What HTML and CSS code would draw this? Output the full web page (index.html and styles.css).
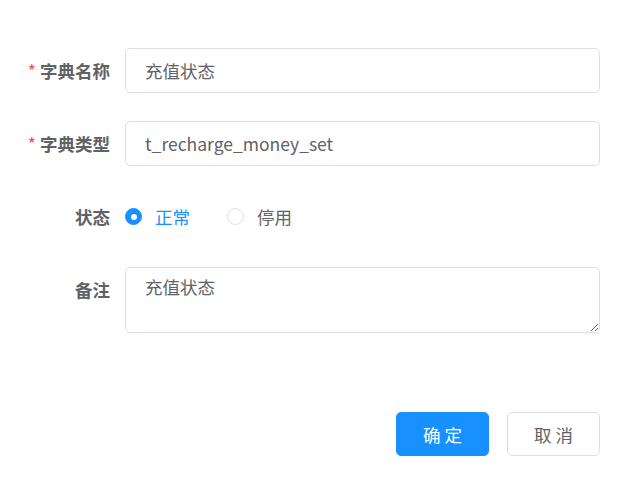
FILE: index.html
```html
<!DOCTYPE html>
<html lang="zh-CN">
<head>
<meta charset="utf-8">
<title>字典</title>
<link rel="stylesheet" href="styles.css">
</head>
<body>
<div class="dialog-body">
  <form class="form">
    <div class="form-item">
      <label class="label"><span class="req">*</span>字典名称</label>
      <div class="control"><input class="input" type="text" value="充值状态"></div>
    </div>
    <div class="form-item">
      <label class="label"><span class="req">*</span>字典类型</label>
      <div class="control"><input class="input" type="text" value="t_recharge_money_set"></div>
    </div>
    <div class="form-item">
      <label class="label">状态</label>
      <div class="control radios">
        <span class="radio checked"><span class="dot"></span><span class="radio-text">正常</span></span>
        <span class="radio"><span class="dot"></span><span class="radio-text">停用</span></span>
      </div>
    </div>
    <div class="form-item">
      <label class="label">备注</label>
      <div class="control"><textarea class="textarea" rows="2">充值状态</textarea></div>
    </div>
  </form>
  <div class="footer">
    <button class="btn primary" type="button">确 定</button>
    <button class="btn" type="button">取 消</button>
  </div>
</div>
</body>
</html>
```
FILE: styles.css
```css
html, body {
  margin: 0;
  padding: 0;
  background: #ffffff;
}
body {
  font-family: "Noto Sans CJK SC", "Noto Sans", sans-serif;
  color: #606266;
}
.dialog-body {
  padding: 48px 22px 0 25px;
}
.form {
  display: flex;
  flex-direction: column;
  gap: 28px;
}
.form-item {
  display: flex;
}
.label {
  width: 100px;
  flex: none;
  box-sizing: border-box;
  padding-right: 15px;
  text-align: right;
  line-height: 45px;
  font-size: 17.5px;
  font-weight: bold;
  color: #606266;
}
.req {
  color: #ff4949;
  margin-right: 4px;
  font-weight: normal;
}
.control {
  flex: 1;
  min-width: 0;
}
.input {
  display: block;
  width: 100%;
  height: 45px;
  box-sizing: border-box;
  border: 1px solid #dcdfe6;
  border-radius: 5px;
  padding: 0 19px;
  font-family: inherit;
  font-size: 17.5px;
  color: #606266;
  outline: none;
  background: #fff;
}
.radios {
  display: flex;
  align-items: center;
  height: 45px;
}
.radio {
  display: inline-flex;
  align-items: center;
  margin-right: 37px;
  font-size: 17.5px;
  color: #606266;
}
.dot {
  width: 17px;
  height: 17px;
  box-sizing: border-box;
  border: 1px solid #dcdfe6;
  border-radius: 50%;
  background: #fff;
  position: relative;
}
.radio.checked .dot {
  background: #1890ff;
  border-color: #1890ff;
}
.radio.checked .dot::after {
  content: "";
  position: absolute;
  left: 50%;
  top: 50%;
  width: 6px;
  height: 6px;
  margin: -3px 0 0 -3px;
  border-radius: 50%;
  background: #fff;
}
.radio-text {
  padding-left: 13px;
}
.radio.checked .radio-text {
  color: #1890ff;
}
.textarea {
  display: block;
  width: 100%;
  height: 66px;
  box-sizing: border-box;
  border: 1px solid #dcdfe6;
  border-radius: 5px;
  padding: 6px 19px;
  font-family: inherit;
  font-size: 17.5px;
  line-height: 1.5;
  color: #606266;
  resize: vertical;
  outline: none;
}
.footer {
  display: flex;
  justify-content: flex-end;
  gap: 18px;
  padding-top: 79px;
}
.btn {
  width: 93px;
  height: 44px;
  box-sizing: border-box;
  border: 1px solid #dcdfe6;
  border-radius: 5px;
  background: #fff;
  color: #606266;
  font-family: inherit;
  font-size: 17.5px;
  padding: 0;
  cursor: pointer;
}
.btn.primary {
  background: #1890ff;
  border-color: #1890ff;
  color: #fff;
}
```
